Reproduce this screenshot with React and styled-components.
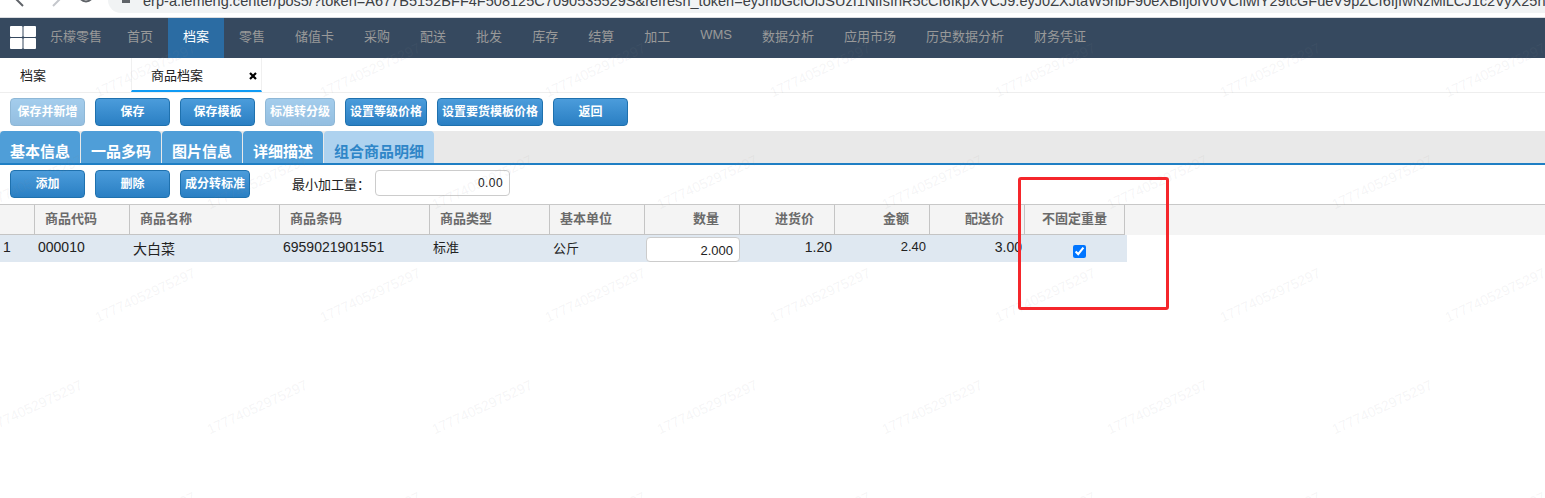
import React from "react";
import styled, { createGlobalStyle } from "styled-components";

const Global = createGlobalStyle`
  html, body { margin: 0; padding: 0; background: #fff; }
  body { font-family: "Liberation Sans", "Noto Sans CJK SC", sans-serif; font-size: 13px; color: #222; }
  * { box-sizing: border-box; }
`;

const Page = styled.div`
  position: relative;
  width: 1545px;
  height: 498px;
  overflow: hidden;
  background: #fff;
`;

/* browser chrome, cropped at the top of the screenshot */
const Chrome = styled.div`
  height: 18px;
  display: flex;
  background: #fff;
  border-bottom: 1px solid #dadce0;
  overflow: hidden;
`;
const ChromeIcons = styled.svg`
  width: 108px;
  height: 13px;
  flex: none;
`;
const UrlBar = styled.div`
  flex: 1;
  height: 13px;
  min-width: 0;
  display: flex;
  align-items: flex-end;
  gap: 13px;
  padding-left: 14px;
  background: #f1f3f4;
  border-bottom-left-radius: 13px;
  overflow: hidden;
`;
const Lock = styled.span`
  flex: none;
  width: 8px;
  height: 3px;
  margin-bottom: 10px;
  background: #5f6368;
`;
const UrlText = styled.span`
  flex: none;
  font-size: 14.5px;
  letter-spacing: 0.03px;
  line-height: 20px;
  margin-bottom: 2px;
  color: #3c4043;
  white-space: nowrap;
`;

/* main navigation */
const Nav = styled.nav`
  height: 40px;
  display: flex;
  align-items: stretch;
  padding-left: 10px;
  background: #36495f;
`;
const Logo = styled.svg`
  width: 26px;
  height: 23px;
  margin-top: 8px;
  flex: none;
`;
const Brand = styled.span`
  margin-left: 14px;
  margin-right: 10px;
  line-height: 38px;
  font-size: 13px;
  color: #999;
`;
const NavItem = styled.a`
  padding: 0 15px;
  font-size: 13px;
  line-height: ${(p) => (p.$raised ? "34px" : "38px")};
  color: ${(p) => (p.$active ? "#fff" : "#999")};
  background: ${(p) => (p.$active ? "#2b6ca3" : "transparent")};
`;

/* open pages */
const PageTabs = styled.div`
  height: 35px;
  display: flex;
  border-bottom: 1px solid #eee;
`;
const PageTab = styled.div`
  position: relative;
  width: 131px;
  height: 34px;
  padding-left: 20px;
  line-height: 36px;
  font-size: 13px;
  color: #222;
  ${(p) =>
    p.$active &&
    `
    padding-left: 19px;
    border-left: 1px solid #f0f0f0;
    border-right: 1px solid #f0f0f0;
    border-bottom: 2px solid #0f9bf5;
    line-height: 35px;
  `}
`;
const Close = styled.span`
  position: absolute;
  right: 3px;
  top: 13px;
  width: 10px;
  height: 10px;
  display: flex;
`;

/* button rows */
const Toolbar = styled.div`
  display: flex;
  align-items: flex-start;
  gap: 10px;
  padding: ${(p) => p.$pad};
`;
const Btn = styled.button`
  width: ${(p) => p.$w}px;
  height: 28px;
  padding: 0;
  border: 1px solid #1f71ae;
  border-radius: 4px;
  background: linear-gradient(#4b9cdb, #2a7fc3);
  color: #fff;
  font-family: inherit;
  font-size: 12px;
  font-weight: 700;
  line-height: 25px;
  white-space: nowrap;
  opacity: ${(p) => (p.$dim ? 0.5 : 1)};
`;

/* sub tabs */
const SubTabs = styled.div`
  height: 34px;
  margin-top: 5px;
  display: flex;
  gap: 1px;
  background: #e9e9e9;
  border-bottom: 2px solid #1f7fc4;
`;
const SubTab = styled.div`
  width: ${(p) => p.$w}px;
  height: 32px;
  padding-left: 10px;
  border-radius: 4px 4px 0 0;
  font-size: 15px;
  font-weight: 700;
  line-height: 41px;
  white-space: nowrap;
  overflow: hidden;
  color: ${(p) => (p.$active ? "#2f86c8" : "#fff")};
  background: ${(p) => (p.$active ? "#aed2ef" : "#4f9ed8")};
`;

const Field = styled.label`
  display: flex;
  align-items: center;
  height: 26px;
  margin-left: 32px;
  gap: 5px;
  font-size: 13px;
  color: #222;
`;
const FieldInput = styled.input`
  width: 135px;
  height: 26px;
  padding: 0 6px;
  border: 1px solid #ccc;
  border-radius: 4px;
  text-align: right;
  font-family: inherit;
  font-size: 12px;
  letter-spacing: 0.4px;
  color: #222;
  background: #fff;
`;

/* grid */
const HeadRow = styled.div`
  margin-top: 6px;
  height: 31px;
  display: flex;
  background: #f4f4f4;
  border-top: 1px solid #c8c8c8;
`;
const Head = styled.div`
  width: ${(p) => p.$w}px;
  height: 30px;
  flex: none;
  padding: ${(p) => (p.$align === "right" ? "0 20px 0 0" : p.$align === "center" ? "0" : "0 0 0 10px")};
  text-align: ${(p) => p.$align || "left"};
  border-right: 1px solid #c4c4c4;
  border-bottom: 1px solid #c4c4c4;
  line-height: 28px;
  font-size: 13px;
  font-weight: 700;
  color: #6b6b6b;
  white-space: nowrap;
`;
const Row = styled.div`
  width: 1127px;
  height: 27px;
  display: flex;
  background: #dfe8f1;
`;
const Cell = styled.div`
  width: ${(p) => p.$w}px;
  flex: none;
  padding: ${(p) => (p.$align === "right" ? "0 2px 0 0" : "0 0 0 3px")};
  text-align: ${(p) => p.$align || "left"};
  line-height: ${(p) => p.$lh || 25}px;
  font-size: ${(p) => p.$fs || 14}px;
  color: #222;
  white-space: nowrap;
`;
const QtyCell = styled.div`
  width: 96px;
  flex: none;
  padding: 2px 0 0 2px;
`;
const QtyInput = styled.input`
  width: 94px;
  height: 25px;
  padding: 1px 6px 0 0;
  border: 1px solid #ccc;
  border-radius: 4px;
  text-align: right;
  font-family: inherit;
  font-size: 13px;
  color: #222;
  background: #fff;
`;
const CheckCell = styled.div`
  width: 103px;
  flex: none;
  display: flex;
  justify-content: center;
  padding: 10px 0 0 7px;
  input { margin: 0; width: 13px; height: 13px; }
`;

/* overlays */
const Marks = styled.div`
  position: absolute;
  inset: 0;
  pointer-events: none;
`;
const Mark = styled.span`
  position: absolute;
  font-size: 14px;
  line-height: 16px;
  white-space: nowrap;
  color: rgba(140, 140, 150, 0.09);
  transform: translate(-50%, -50%) rotate(-25deg);
`;
const Highlight = styled.div`
  position: absolute;
  left: 1018px;
  top: 177px;
  width: 151px;
  height: 133px;
  border: 3px solid #f5262b;
  border-radius: 3px;
  pointer-events: none;
`;

const navItems = ["首页", "档案", "零售", "储值卡", "采购", "配送", "批发", "库存", "结算", "加工", "WMS", "数据分析", "应用市场", "历史数据分析", "财务凭证"];
const topButtons = [
  ["保存并新增", 75, true], ["保存", 75], ["保存模板", 75], ["标准转分级", 70, true],
  ["设置等级价格", 82], ["设置要货模板价格", 106], ["返回", 75],
];
const subTabs = [["基本信息", 80], ["一品多码", 80], ["图片信息", 80], ["详细描述", 80], ["组合商品明细", 110, true]];
const heads = [
  ["", 35], ["商品代码", 95], ["商品名称", 150], ["商品条码", 150], ["商品类型", 120], ["基本单位", 95],
  ["数量", 95, "right"], ["进货价", 95, "right"], ["金额", 95, "right"], ["配送价", 95, "right"], ["不固定重量", 100, "center"],
];
const URL_TEXT = "erp-a.lemeng.center/pos5/?token=A677B5152BFF4F508125C7090535529S&refresh_token=eyJhbGciOiJSUzI1NiIsInR5cCI6IkpXVCJ9.eyJ0ZXJtaW5hbF90eXBlIjoiV0VCIiwiY29tcGFueV9pZCI6IjIwNzMiLCJ1c2VyX25h";

const marks = [];
[70, 182, 295, 407, 519].forEach((y, r) => {
  for (let k = -1; k < 8; k++) marks.push({ x: (r % 2 ? 257 : 145) + 225 * k, y });
});

export default function App() {
  return (
    <Page>
      <Global />
      <Chrome>
        <ChromeIcons viewBox="0 0 108 13" fill="none">
          <path d="M23 6 L15 -2" stroke="#5f6368" strokeWidth="2" />
          <path d="M53 6 L60 -1" stroke="#c4c7cc" strokeWidth="2" />
          <path d="M80 -2 A7 7 0 0 0 92 -2" stroke="#5f6368" strokeWidth="2" />
        </ChromeIcons>
        <UrlBar>
          <Lock />
          <UrlText>{URL_TEXT}</UrlText>
        </UrlBar>
      </Chrome>

      <Nav>
        <Logo viewBox="0 0 26 23">
          <rect x="0" y="0" width="12.5" height="11" rx="1" fill="#fff" />
          <rect x="13.5" y="0" width="12.5" height="11" rx="1" fill="#fff" />
          <rect x="0" y="12" width="12.5" height="11" rx="1" fill="#fff" />
          <rect x="13.5" y="12" width="12.5" height="11" rx="1" fill="#fff" />
        </Logo>
        <Brand>乐檬零售</Brand>
        {navItems.map((t) => (
          <NavItem key={t} $active={t === "档案"} $raised={t === "WMS"}>{t}</NavItem>
        ))}
      </Nav>

      <PageTabs>
        <PageTab>档案</PageTab>
        <PageTab $active>
          商品档案
          <Close>
            <svg width="10" height="10" viewBox="0 0 10 10">
              <path d="M2 2 L8 8 M8 2 L2 8" stroke="#000" strokeWidth="2.2" />
            </svg>
          </Close>
        </PageTab>
      </PageTabs>

      <Toolbar $pad="5px 10px 0">
        {topButtons.map(([t, w, dim]) => (
          <Btn key={t} $w={w} $dim={dim}>{t}</Btn>
        ))}
      </Toolbar>

      <SubTabs>
        {subTabs.map(([t, w, active]) => (
          <SubTab key={t} $w={w} $active={active}>{t}</SubTab>
        ))}
      </SubTabs>

      <Toolbar $pad="5px 10px 0">
        <Btn $w={75}>添加</Btn>
        <Btn $w={75}>删除</Btn>
        <Btn $w={70}>成分转标准</Btn>
        <Field>
          最小加工量：
          <FieldInput readOnly value="0.00" />
        </Field>
      </Toolbar>

      <HeadRow>
        {heads.map(([t, w, a], i) => (
          <Head key={i} $w={w} $align={a}>{t}</Head>
        ))}
      </HeadRow>
      <Row>
        <Cell $w={35}>1</Cell>
        <Cell $w={95}>000010</Cell>
        <Cell $w={150} $lh={28}>大白菜</Cell>
        <Cell $w={150}>6959021901551</Cell>
        <Cell $w={120} $lh={26} $fs={13}>标准</Cell>
        <Cell $w={94} $lh={28} $fs={13}>公斤</Cell>
        <QtyCell><QtyInput readOnly value="2.000" /></QtyCell>
        <Cell $w={94} $align="right" $lh={25}>1.20</Cell>
        <Cell $w={94} $align="right" $lh={23} $fs={13}>2.40</Cell>
        <Cell $w={96} $align="right" $lh={25}>3.00</Cell>
        <CheckCell><input type="checkbox" checked readOnly /></CheckCell>
      </Row>

      <Marks>
        {marks.map((m, i) => (
          <Mark key={i} style={{ left: m.x, top: m.y }}>17774052975297</Mark>
        ))}
      </Marks>
      <Highlight />
    </Page>
  );
}
